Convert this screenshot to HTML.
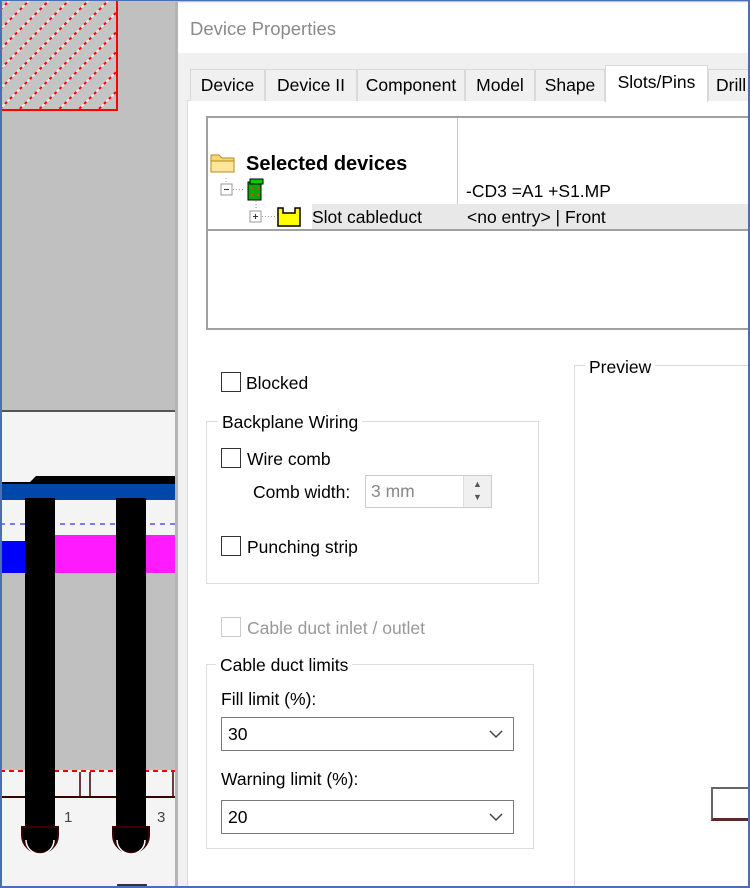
<!DOCTYPE html>
<html><head><style>
*{box-sizing:border-box;margin:0;padding:0}
body{width:750px;height:888px;overflow:hidden;position:relative;background:#c0c0c0;font-family:"Liberation Sans",sans-serif;font-size:17.5px;color:#000}
.a{position:absolute}
.t{position:absolute;white-space:nowrap;line-height:18px}
.cb{position:absolute;width:20px;height:20px;border:1px solid #333;background:#fff}
.tab{position:absolute;top:69px;height:32px;border:1px solid #d9d9d9;border-bottom:none;background:#f0f0f0;text-align:center;line-height:30px;color:#000}
.grp{position:absolute;border:1px solid #dcdcdc}
.gl{position:absolute;background:#fff;padding:0 4px;line-height:18px;white-space:nowrap}
.dd{position:absolute;height:34px;border:1px solid #7a7a7a;background:#fff;padding-left:6px;line-height:32px}
.chev{position:absolute;right:10px;top:12px}
</style></head><body>
<svg class="a" style="left:0;top:0" width="176" height="888">
<defs><pattern id="h" width="14" height="14" patternUnits="userSpaceOnUse" patternTransform="rotate(-45)"><rect width="14" height="14" fill="#c4c4c4"/><line x1="0" y1="7" x2="14" y2="7" stroke="#e8e8e8" stroke-width="2"/><line x1="0" y1="7" x2="14" y2="7" stroke="#f00" stroke-width="2" stroke-dasharray="3 4"/></pattern></defs>
<rect x="0" y="0" width="117" height="110" fill="url(#h)" stroke="#f00" stroke-width="2"/>
<rect x="0" y="410" width="176" height="2" fill="#555"/>
<rect x="0" y="412" width="176" height="476" fill="#f4f4f4"/>
<path d="M0 482 L30 482 L36 476 L176 476 L176 484 L0 484Z" fill="#000"/>
<rect x="0" y="484" width="176" height="16" fill="#0047ab"/>
<line x1="0" y1="524" x2="176" y2="524" stroke="#00f" stroke-dasharray="5 5"/>
<rect x="0" y="541" width="25" height="32" fill="#00f"/>
<rect x="55" y="535" width="121" height="38" fill="#ff1aff"/>
<rect x="0" y="573" width="176" height="197" fill="#c0c0c0"/>
<line x1="0" y1="771" x2="176" y2="771" stroke="#e00" stroke-width="2" stroke-dasharray="5 4"/>
<rect x="0" y="772" width="176" height="25" fill="#f4f4f4"/>
<line x1="0" y1="797" x2="176" y2="797" stroke="#3a0000" stroke-width="2"/>
<line x1="80" y1="772" x2="80" y2="797" stroke="#3a0000" stroke-width="1.5"/>
<line x1="90" y1="772" x2="90" y2="797" stroke="#3a0000" stroke-width="1.5"/>
<line x1="173" y1="772" x2="173" y2="797" stroke="#3a0000" stroke-width="1.5"/>
<rect x="25" y="498" width="30" height="330" fill="#000"/>
<rect x="116" y="498" width="30" height="330" fill="#000"/>
<path d="M22 835 a17 17 0 0 0 36 0 l0-8 l-36 0z" fill="#000" stroke="#3a0000" stroke-width="2"/>
<path d="M26 840 a14 14 0 0 0 28 0" fill="none" stroke="#fff" stroke-width="1.5"/>
<path d="M113 835 a17 17 0 0 0 36 0 l0-8 l-36 0z" fill="#000" stroke="#3a0000" stroke-width="2"/>
<path d="M117 840 a14 14 0 0 0 28 0" fill="none" stroke="#fff" stroke-width="1.5"/>
<text x="64" y="822" font-family="Liberation Sans" font-size="15" fill="#444">1</text>
<text x="157" y="822" font-family="Liberation Sans" font-size="15" fill="#444">3</text>
<rect x="117" y="884" width="30" height="4" fill="#333"/>
</svg>
<div class="a" style="left:175px;top:2px;width:575px;height:886px;background:#f0f0f0;border-left:3px solid #b4b4b4"></div>
<div class="a" style="left:178px;top:3px;width:572px;height:50px;background:#fff"></div>
<div class="t" style="left:190px;top:20px;color:#8a8a8a;font-size:18.5px">Device Properties</div>
<div class="a" style="left:187px;top:100px;width:563px;height:788px;background:#fff;border-left:1px solid #d9d9d9;border-top:1px solid #d9d9d9"></div>
<div class="tab" style="left:190px;width:75px">Device</div>
<div class="tab" style="left:265px;width:92px">Device II</div>
<div class="tab" style="left:357px;width:108px">Component</div>
<div class="tab" style="left:465px;width:70px">Model</div>
<div class="tab" style="left:535px;width:70px">Shape</div>
<div class="tab" style="left:605px;top:65px;height:37px;width:103px;background:#fff;line-height:32px">Slots/Pins</div>
<div class="tab" style="left:708px;width:42px;text-align:left;padding-left:7px">Drill</div>
<div class="a" style="left:206px;top:116px;width:544px;height:214px;border:2px solid #a0a0a0;border-right:none;background:#fff"></div>
<div class="a" style="left:457px;top:118px;width:1px;height:112px;background:#c8c8c8"></div>
<div class="a" style="left:312px;top:204px;width:438px;height:25px;background:#e8e8e8"></div>
<div class="a" style="left:208px;top:229px;width:542px;height:2px;background:#a0a0a0"></div>
<svg class="a" style="left:210px;top:150px" width="30" height="26"><path d="M1 5 h8 l3 3 h12 v14 h-23z" fill="#f5d77a" stroke="#b58a1c"/><path d="M1 11 h23 v11 h-23z" fill="#ffe79a" stroke="#b58a1c"/></svg>
<div class="t" style="left:246px;top:155px;font-weight:bold;font-size:20px">Selected devices</div>
<svg class="a" style="left:220px;top:178px" width="100" height="50"><rect x="1" y="6" width="11" height="11" fill="#fff" stroke="#999"/><line x1="4" y1="11.5" x2="9" y2="11.5" stroke="#335"/><line x1="13" y1="11.5" x2="24" y2="11.5" stroke="#999" stroke-dasharray="1 2"/><line x1="6" y1="0" x2="6" y2="5" stroke="#999" stroke-dasharray="1 2"/><rect x="28" y="4" width="13" height="18" fill="#0a0" stroke="#000"/><rect x="30" y="1" width="13" height="5" fill="#0c0" stroke="#000"/><circle cx="32" cy="10" r="1.2" fill="#f33"/><circle cx="38" cy="10" r="1.2" fill="#f33"/><circle cx="32" cy="17" r="1.2" fill="#f33"/><circle cx="38" cy="17" r="1.2" fill="#f33"/><line x1="36" y1="23" x2="36" y2="32" stroke="#999" stroke-dasharray="1 2"/><rect x="30" y="33" width="11" height="11" fill="#fff" stroke="#999"/><line x1="33" y1="38.5" x2="38" y2="38.5" stroke="#335"/><line x1="35.5" y1="36" x2="35.5" y2="41" stroke="#335"/><line x1="42" y1="38.5" x2="56" y2="38.5" stroke="#999" stroke-dasharray="1 2"/><path d="M58 30 h5 v5 h12 v-5 h5 v18 h-22z" fill="#ff0" stroke="#000" stroke-width="1.5"/></svg>
<div class="t" style="left:466px;top:182px">-CD3 =A1 +S1.MP</div>
<div class="t" style="left:312px;top:208px">Slot cableduct</div>
<div class="t" style="left:467px;top:208px">&lt;no entry&gt; | Front</div>
<div class="cb" style="left:221px;top:372px"></div><div class="t" style="left:246px;top:374px">Blocked</div>
<div class="grp" style="left:206px;top:421px;width:333px;height:163px"></div>
<div class="gl" style="left:245px;top:413px;left:245px;display:none"></div>
<div class="gl" style="left:245px;top:413px;left:245px;display:none"></div>
<div class="gl" style="left:245px;top:413px;display:none"></div>
<div class="gl" style="left:245px;top:413px;display:none"></div>
<div class="gl" style="left:245px;top:413px;display:none"></div>
<div class="gl" style="left:245px;top:413px;display:none"></div>
<div class="gl" style="left:245px;top:413px;display:none"></div>
<div class="gl" style="left:245px;top:413px;display:none"></div>
<div class="gl" style="left:245px;top:413px;display:none"></div>
<div class="gl" style="left:245px;top:413px;display:none"></div>
<div class="gl" style="left:245px;top:413px;display:none"></div>
<div class="gl" style="left:218px;top:413px">Backplane Wiring</div>
<div class="cb" style="left:221px;top:448px"></div><div class="t" style="left:247px;top:450px">Wire comb</div>
<div class="t" style="left:253px;top:483px">Comb width:</div>
<div class="a" style="left:365px;top:475px;width:127px;height:33px;border:1px solid #ccc;background:#fff;color:#888;padding-left:5px;line-height:31px">3 mm</div>
<div class="a" style="left:463px;top:476px;width:28px;height:31px;background:#f0f0f0;border-left:1px solid #ddd;font-size:9px;color:#555;text-align:center;line-height:13px;padding-top:2px">▲<br>▼</div>
<div class="cb" style="left:221px;top:536px"></div><div class="t" style="left:247px;top:538px">Punching strip</div>
<div class="cb" style="left:221px;top:617px;border-color:#ccc"></div><div class="t" style="left:247px;top:619px;color:#999">Cable duct inlet / outlet</div>
<div class="grp" style="left:206px;top:664px;width:328px;height:185px"></div>
<div class="gl" style="left:216px;top:656px">Cable duct limits</div>
<div class="t" style="left:221px;top:690px">Fill limit (%):</div>
<div class="dd" style="left:221px;top:717px;width:293px">30<svg class="chev" width="14" height="9"><path d="M1 1 L7 7 L13 1" fill="none" stroke="#444" stroke-width="1.5"/></svg></div>
<div class="t" style="left:221px;top:770px">Warning limit (%):</div>
<div class="dd" style="left:221px;top:800px;width:293px">20<svg class="chev" width="14" height="9"><path d="M1 1 L7 7 L13 1" fill="none" stroke="#444" stroke-width="1.5"/></svg></div>
<div class="grp" style="left:574px;top:365px;width:176px;height:523px;border-right:none;border-bottom:none"></div>
<div class="gl" style="left:585px;top:358px">Preview</div>
<div class="a" style="left:711px;top:787px;width:39px;height:34px;border:2px solid #666;border-right:none;border-bottom:3px solid #5a2a2a;background:#fff"></div>
<div class="a" style="left:0;top:0;width:750px;height:888px;border:2px solid #4a6fb5;border-top-width:1px;pointer-events:none"></div>
</body></html>
